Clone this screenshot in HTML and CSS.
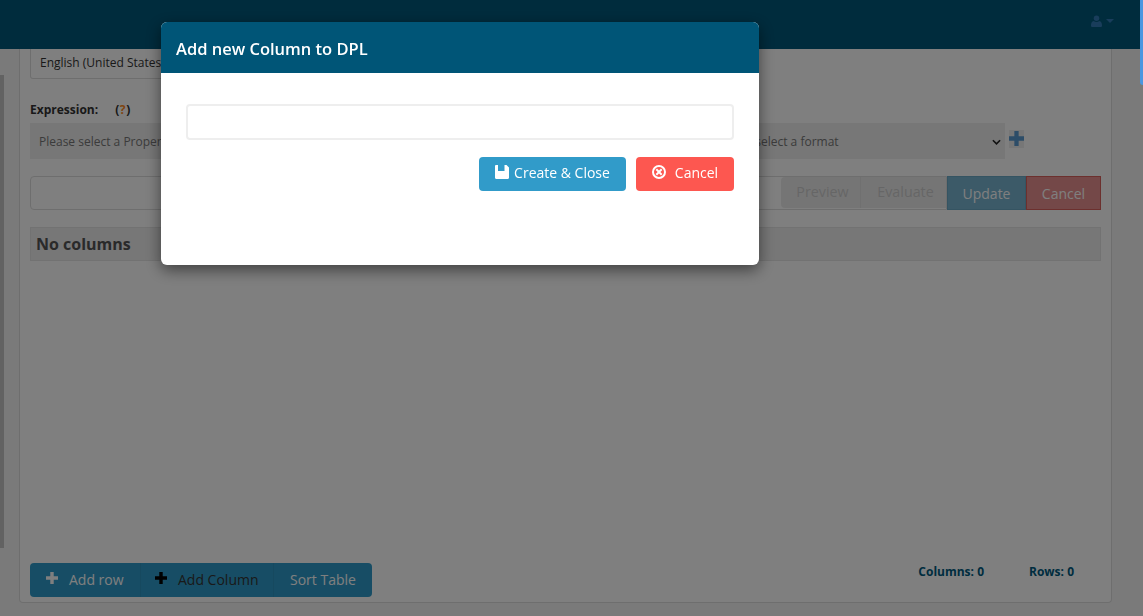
FILE: index.html
```html
<!DOCTYPE html>
<html lang="en">
<head>
<meta charset="utf-8">
<title>Add new Column to DPL</title>
<link rel="stylesheet" href="styles.css">
</head>
<body>
<div class="page">
  <header class="topbar">
    <div class="user">
      <svg class="user-icon" viewBox="0 0 12 13"><circle cx="6" cy="3.4" r="3"/><path d="M1 13c-.7 0-1-.5-1-1.2C0 9 .8 6.8 3 6.6c.8.6 1.9 1 3 1s2.200-.4 3-1c2.200.2 3 2.400 3 5.200 0 .7-.3 1.200-1 1.200z"/></svg>
      <span class="caret"></span>
    </div>
  </header>
  <div class="stage">
    <aside class="rail"><div class="rail-bar"></div></aside>
    <main class="panel">
      <div class="lang">English (United States)</div>
      <div class="expr-label"><b>Expression:</b><span class="help">(<i>?</i>)</span></div>
      <div class="selects">
        <div class="fake-select prop">Please select a Property</div>
        <div class="fake-select format">Please select a format<svg class="chev" viewBox="0 0 10 6"><path d="M1 1l4 4 4-4"/></svg></div>
        <span class="plus-box"><svg class="plus blue" viewBox="0 0 14 14"><path d="M5 0h4v5h5v4H9v5H5V9H0V5h5z"/></svg></span>
      </div>
      <div class="editor">
        <div class="editor-input">
          <span class="ghost">Preview</span><span class="ghost last">Evaluate</span>
        </div>
        <span class="act update">Update</span><span class="act cancel">Cancel</span>
      </div>
      <div class="nocols">No columns</div>
      <div class="spacer"></div>
      <div class="foot">
        <div class="btn-group">
          <span class="gbtn first"><svg class="plus" viewBox="0 0 14 14"><path d="M5 0h4v5h5v4H9v5H5V9H0V5h5z"/></svg>Add row</span>
          <span class="gbtn dark"><svg class="plus" viewBox="0 0 14 14"><path d="M5 0h4v5h5v4H9v5H5V9H0V5h5z"/></svg>Add Column</span>
          <span class="gbtn sort">Sort Table</span>
        </div>
        <div class="counts"><b>Columns: 0</b><b>Rows: 0</b></div>
      </div>
    </main>
    <div class="gutter"></div>
  </div>
</div>
<div class="backdrop"></div>
<div class="side-tab"></div>
<section class="modal">
  <h2 class="modal-head">Add new Column to DPL</h2>
  <div class="modal-body">
    <input class="modal-input" type="text">
    <div class="modal-actions">
      <button class="mbtn create" type="button"><svg class="ico" viewBox="0 0 14 14"><path fill-rule="evenodd" d="M0 1.200C0 .5.500 0 1.200 0H3v6h6.500V0h2L14 2.500v10.300c0 .7-.5 1.200-1.200 1.200H1.200C.5 14 0 13.500 0 12.800z"/></svg>Create &amp; Close</button>
      <button class="mbtn stop" type="button"><svg class="ico" viewBox="0 0 14 14"><path fill-rule="evenodd" d="M7 0a7 7 0 110 14A7 7 0 017 0zm0 2a5 5 0 100 10A5 5 0 007 2zM5 3.600L7 5.600l2-2 1.400 1.400-2 2 2 2L9 10.400l-2-2-2 2L3.600 9l2-2-2-2z"/></svg>Cancel</button>
    </div>
  </div>
</section>
</body>
</html>
```

FILE: styles.css
```css
* { box-sizing: border-box; }
html, body { margin: 0; height: 616px; overflow: hidden; }
body { font-family: "Open Sans", sans-serif; background: #fff; color: #333; }

.page { height: 616px; display: flex; flex-direction: column; background: #f5f5f5; }
.topbar { height: 49px; flex: none; background: #00587a; display: flex; justify-content: flex-end; align-items: center; padding: 0 29px 7px 0; }
.user { display: flex; align-items: center; gap: 4px; }
.user-icon { width: 11px; height: 12px; fill: #337ab7; }
.caret { border: 4px solid transparent; border-top-color: #337ab7; border-bottom: 0; }

.stage { flex: 1; display: flex; min-height: 0; }
.rail { width: 19px; flex: none; padding-top: 26px; }
.rail-bar { width: 4px; height: 473px; background: #c4c4c4; }
.gutter { width: 31px; flex: none; }

.panel { flex: 1; min-width: 0; height: 554px; background: #fff; border: 1px solid #ddd; border-top: 0; border-radius: 0 0 4px 4px; padding: 0 10px 5px; display: flex; flex-direction: column; }
.lang { width: 200px; height: 30px; border: 1px solid #ddd; border-top: 0; border-radius: 0 0 3px 3px; font-size: 12px; line-height: 27px; padding-left: 9px; white-space: nowrap; overflow: hidden; color: #333; }

.expr-label { margin-top: 23px; font-size: 12px; line-height: 16px; height: 16px; display: flex; color: #333; }
.help { margin-left: 17px; font-weight: 700; letter-spacing: .6px; }
.help i { font-style: normal; color: #ff8a1e; }

.selects { margin-top: 5px; display: flex; align-items: flex-start; }
.fake-select { height: 36px; background: #eee; font-size: 12px; line-height: 37px; padding-left: 9px; color: #777; white-space: nowrap; }
.prop { width: 400px; }
.format { width: 575px; position: relative; padding-left: 286px; }
.chev { position: absolute; right: 4px; top: 16px; width: 9px; height: 6px; fill: none; stroke: #222; stroke-width: 1.800; }
.plus { width: 14px; height: 14px; fill: currentColor; flex: none; }
.plus-box { margin: 7px 0 0 4px; width: 15px; height: 18px; background: #eee; display: flex; align-items: flex-start; }
.plus.blue { width: 15px; height: 15px; margin-top: 1px; color: #5a9ad0; }

.editor { margin-top: 17px; height: 34px; display: flex; }
.editor-input { flex: 1; border: 1px solid #ddd; border-radius: 4px 0 0 4px; display: flex; justify-content: flex-end; align-items: stretch; padding-bottom: 1px; }
.ghost { width: 80px; font-size: 14.300px; line-height: 30px; text-align: center; background: #ebebeb; color: #cdcdcd; border-right: 1px solid #e0e0e0; padding-left: 4px; }
.ghost:first-child { border-radius: 4px 0 0 4px; }
.ghost.last { width: 85px; border-right: 0; }
.act { font-size: 14px; line-height: 33px; text-align: center; color: #fff; border: 1px solid transparent; }
.update { width: 79px; background: #78b4d0; border-color: #6aa8c4; }
.cancel { width: 75px; background: #e89090; border-color: #d9605c; }

.nocols { margin-top: 17px; height: 34px; background: #eee; border: 1px solid #e4e4e4; font-size: 16px; font-weight: 700; line-height: 33px; padding-left: 5px; color: #555; }
.spacer { flex: 1; }

.foot { display: flex; justify-content: space-between; align-items: flex-start; height: 34px; flex: none; }
.btn-group { display: flex; height: 34px; background: #2f9bca; border-radius: 4px; color: #fff; }
.gbtn { font-size: 14px; line-height: 34px; display: flex; align-items: center; gap: 11px; color: #fff; white-space: nowrap; }
.gbtn .plus { width: 12px; height: 12px; margin-top: -4px; }
.first { width: 110px; padding-left: 16px; }
.gbtn.dark { width: 134px; padding-left: 14px; color: #333; border-left: 1px solid #2c93bf; border-right: 1px solid #2c93bf; }
.gbtn.dark .plus { color: #000; }
.sort { width: 98px; padding-left: 16px; }
.counts { display: flex; gap: 45px; padding: 0 27px 0 0; font-size: 12px; line-height: 16px; color: #005a7e; margin-top: 1px; }

.backdrop { position: fixed; inset: 0; background: rgba(0, 0, 0, .5); }
.side-tab { position: fixed; top: 0; right: 0; width: 3px; height: 85px; background: #4a96e0; border-radius: 0 0 0 3px; }

.modal { position: fixed; left: 161px; top: 22px; width: 598px; height: 243px; background: #fff; border-radius: 6px; overflow: hidden; box-shadow: 0 5px 15px rgba(0, 0, 0, .5); }
.modal-head { margin: 0; height: 51px; background: #005577; color: #fff; font-size: 16.500px; font-weight: 600; line-height: 53px; padding-left: 15px; }
.modal-body { padding: 31px 25px 0; }
.modal-input { display: block; width: 100%; height: 36px; border: 2px solid #eee; border-radius: 4px; background: #fff; outline: 0; }
.modal-actions { margin-top: 17px; display: flex; justify-content: flex-end; gap: 10px; }
.mbtn { height: 34px; border: 1px solid transparent; border-radius: 4px; color: #fff; font: 400 14px/30px "Open Sans", sans-serif; display: flex; align-items: center; justify-content: center; padding: 0 0 2px; }
.ico { width: 14px; height: 14px; fill: #fff; flex: none; margin-top: -2px; }
.create { width: 147px; background: #319bc9; gap: 5px; }
.stop { width: 98px; background: #fd5750; gap: 9px; }
```
